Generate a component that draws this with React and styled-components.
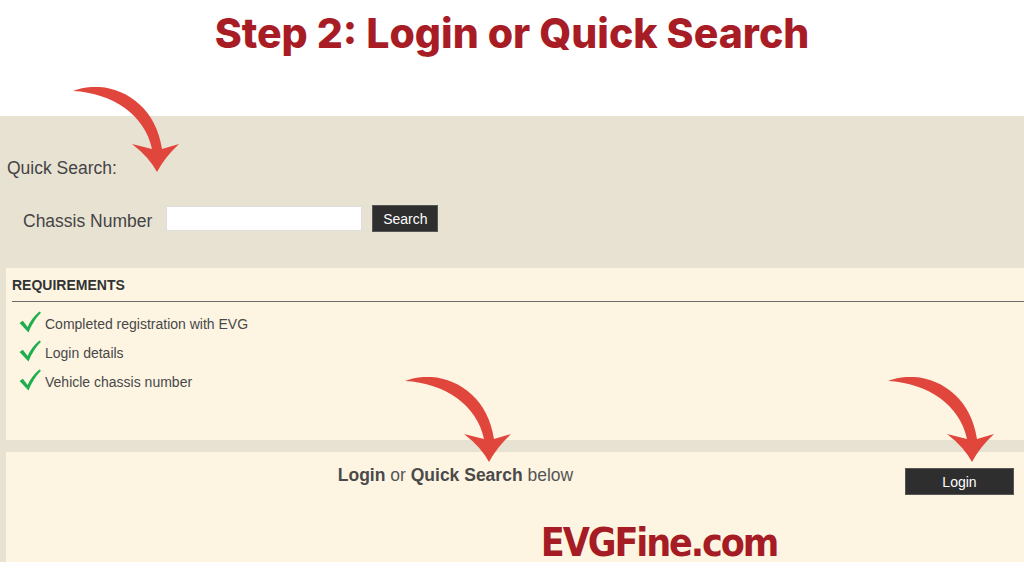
import React from "react";
import styled, { createGlobalStyle } from "styled-components";

const Global = createGlobalStyle`
  html, body { margin: 0; padding: 0; background: #ffffff; }
  body { font-family: "Liberation Sans", Arial, sans-serif; }
  * { box-sizing: border-box; }
`;

const Page = styled.div`
  position: relative;
  width: 1024px;
  height: 576px;
  overflow: hidden;
  background: #ffffff;
  display: flex;
  flex-direction: column;
`;

const Header = styled.header`
  height: 116px;
  display: flex;
  justify-content: center;
  padding-top: 9px;
`;

const Title = styled.h1`
  margin: 0;
  font-family: Inter, "Open Sans", sans-serif;
  font-weight: 800;
  font-size: 41px;
  line-height: 48px;
  color: #a81d25;
`;

const Section = styled.section`
  background: #e8e2d3;
  height: 446px;
  padding-left: 6px;
  display: flex;
  flex-direction: column;
`;

const QuickSearch = styled.div`
  padding-top: 42px;
  height: 152px;
  display: flex;
  flex-direction: column;
`;

const Label = styled.div`
  font-size: 17.5px;
  line-height: 20px;
  color: #444444;
  padding-left: 1px;
`;

const SearchRow = styled.div`
  margin-top: 27px;
  padding-left: 17px;
  display: flex;
  align-items: center;
  height: 27px;
`;

const FieldLabel = styled.label`
  font-size: 17.5px;
  color: #444444;
  margin-right: 14px;
  padding-top: 5px;
`;

const Input = styled.input`
  width: 196px;
  height: 25px;
  border: 1px solid #dddddd;
  background: #ffffff;
  margin: 0 10px 0 0;
  padding: 0;
`;

const DarkButton = styled.button`
  width: ${(p) => p.$w}px;
  height: 27px;
  background: #2e2e2e;
  color: #ffffff;
  border: 1px solid #555;
  font-family: "Liberation Sans", Arial, sans-serif;
  font-size: 14px;
  padding: 0;
  cursor: pointer;
`;

const Panel = styled.div`
  background: #fdf5e2;
  height: ${(p) => p.$h}px;
  margin-top: ${(p) => p.$mt}px;
  display: flex;
  flex-direction: column;
`;

const PanelTitle = styled.div`
  font-size: 14px;
  font-weight: bold;
  color: #333333;
  padding: 9px 0 8px 0;
  line-height: 16px;
  border-bottom: 1px solid #6b6b6b;
  margin-left: 6px;
`;

const List = styled.ul`
  list-style: none;
  margin: 0;
  padding: 9px 0 0 13px;
  display: flex;
  flex-direction: column;
  gap: 7px;
`;

const Item = styled.li`
  display: flex;
  align-items: flex-end;
  gap: 4px;
  height: 22px;
  font-size: 14px;
  color: #484848;
`;

const ItemText = styled.span`
  line-height: 17px;
`;

const LoginRow = styled.div`
  display: flex;
  align-items: flex-start;
`;

const Prompt = styled.div`
  flex: 1;
  text-align: center;
  font-size: 17.5px;
  line-height: 20px;
  color: #555555;
  padding-top: 13px;
  b { color: #4a4a4a; }
`;

const LoginWrap = styled.div`
  padding: 16px 10px 0 0;
`;

const Brand = styled.div`
  margin-top: 28px;
  padding-left: 288px;
  text-align: center;
  font-family: "DejaVu Sans", sans-serif;
  font-stretch: condensed;
  font-weight: bold;
  font-size: 39px;
  line-height: 40px;
  letter-spacing: -2.1px;
  color: #a51c24;
`;

const ArrowSvg = styled.svg`
  position: absolute;
  left: ${(p) => p.$x}px;
  top: ${(p) => p.$y}px;
  width: 106px;
  height: 86px;
  pointer-events: none;
`;

const CheckSvg = styled.svg`
  width: 22px;
  height: 22px;
  flex: none;
`;

const Arrow = ({ x, y }) => (
  <ArrowSvg $x={x} $y={y} viewBox="0 0 106 86">
    <path
      fill="#e1463c"
      d="M0 4 C 36 -10, 82 12, 89 62 L 106 57 Q 92 70, 84 85 Q 76 70, 59 57 L 79 62 C 72 28, 40 6, 0 4 Z"
    />
  </ArrowSvg>
);

const Check = () => (
  <CheckSvg viewBox="0 0 20 20">
    <path
      fill="#1fae4f"
      d="M0.5 11 L3.5 8.8 L7.8 14.5 Q11.5 6.5 18.5 0.5 L20 1.6 Q13 8.5 8.6 19.5 Z"
    />
  </CheckSvg>
);

const items = [
  "Completed registration with EVG",
  "Login details",
  "Vehicle chassis number",
];

export default function App() {
  return (
    <>
      <Global />
      <Page>
        <Header>
          <Title>Step 2: Login or Quick Search</Title>
        </Header>
        <Section>
          <QuickSearch>
            <Label>Quick Search:</Label>
            <SearchRow>
              <FieldLabel>Chassis Number</FieldLabel>
              <Input type="text" />
              <DarkButton $w={66}>Search</DarkButton>
            </SearchRow>
          </QuickSearch>
          <Panel $h={172} $mt={0}>
            <PanelTitle>REQUIREMENTS</PanelTitle>
            <List>
              {items.map((t) => (
                <Item key={t}>
                  <Check />
                  <ItemText>{t}</ItemText>
                </Item>
              ))}
            </List>
          </Panel>
          <Panel $h={110} $mt={12}>
            <LoginRow>
              <Prompt>
                <b>Login</b> or <b>Quick Search</b> below
              </Prompt>
              <LoginWrap>
                <DarkButton $w={109}>Login</DarkButton>
              </LoginWrap>
            </LoginRow>
            <Brand>EVGFine.com</Brand>
          </Panel>
        </Section>
        <Arrow x={73} y={87} />
        <Arrow x={405} y={377} />
        <Arrow x={888} y={377} />
      </Page>
    </>
  );
}
